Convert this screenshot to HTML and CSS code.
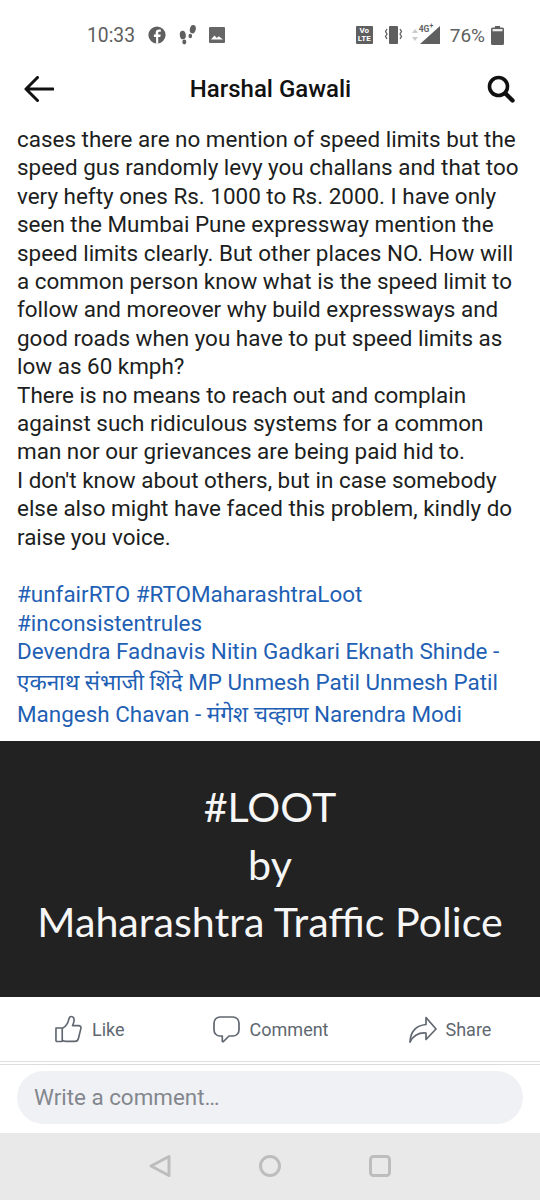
FILE: index.html
```html
<!DOCTYPE html>
<html lang="en">
<head>
<meta charset="utf-8">
<title>Harshal Gawali</title>
<link rel="stylesheet" href="styles.css">
</head>
<body>
<div class="phone">
  <div class="status">
    <div class="status-left">
      <span class="time">10:33</span>
      <svg class="ic-fb" viewBox="0 0 18 18"><circle cx="9" cy="9" r="8.6" fill="#5f5f5f"/><path d="M10.2 17.5v-6.4h2.1l.4-2.5h-2.5V7c0-.8.3-1.3 1.3-1.3h1.3V3.5c-.4 0-1-.1-1.800-.1-2 0-3.300 1.200-3.300 3.300v1.900H5.900v2.500h2.200v6.400z" fill="#fff"/></svg>
      <svg class="ic-steps" viewBox="0 0 18 20"><g fill="#5f5f5f"><ellipse cx="3.800" cy="10" rx="3" ry="4.300" transform="rotate(-8 3.800 10)"/><ellipse cx="5.300" cy="17" rx="2" ry="2.400"/><ellipse cx="13.800" cy="4.200" rx="2.900" ry="4.200" transform="rotate(14 13.800 4.200)"/><ellipse cx="11.300" cy="11" rx="1.800" ry="2.200"/></g></svg>
      <svg class="ic-img" viewBox="0 0 16 16"><rect width="16" height="16" rx="1" fill="#666"/><path d="M2 12.500l3.500-4 2.300 2.500 2-1.800 4.200 3.300z" fill="#fff"/></svg>
    </div>
    <div class="status-right">
      <span class="volte"><span>Vo</span><span>LTE</span></span>
      <svg class="ic-vib" viewBox="0 0 19 18"><rect x="5" y="0" width="9" height="18" rx="1" fill="#5f5f5f"/><path d="M3 3 1.500 5.500 3 8 1.500 10.500 3 13M16 3l1.500 2.500L16 8l1.500 2.500L16 13" fill="none" stroke="#5f5f5f" stroke-width="1.300"/></svg>
      <svg class="ic-updown" viewBox="0 0 6 12"><path d="M3 0 6 4H0zM3 12 0 8h6z" fill="#ccc"/></svg>
      <span class="signal">
        <svg class="ic-signal" viewBox="0 0 20 18"><path d="M20 0V18H0z" fill="#5f5f5f"/></svg>
        <span class="net">4G<sup>+</sup></span>
      </span>
      <span class="pct">76%</span>
      <svg class="ic-batt" viewBox="0 0 13 19"><path d="M4 0h5v1.500h2.500A1.500 1.500 0 0 1 13 3v14.500a1.500 1.500 0 0 1-1.500 1.500h-10A1.500 1.500 0 0 1 0 17.500V3a1.500 1.500 0 0 1 1.500-1.500H4z" fill="#5f5f5f"/><rect x="1.500" y="3" width="10" height="2.300" fill="#e8e8e8"/></svg>
    </div>
  </div>

  <header class="topbar">
    <svg class="ic-back" viewBox="0 0 30 26"><path d="M29 13H2M13.500 1.500 2 13l11.500 11.500" fill="none" stroke="#111" stroke-width="3" stroke-linecap="round" stroke-linejoin="round"/></svg>
    <h1 class="title">Harshal Gawali</h1>
    <svg class="ic-search" viewBox="0 0 28 28"><circle cx="11.500" cy="11.500" r="9" fill="none" stroke="#111" stroke-width="3.600"/><path d="M18.500 18.500 25.500 25.500" stroke="#111" stroke-width="4.400" stroke-linecap="round"/></svg>
  </header>

  <main class="post">
    <p class="body-text">cases there are no mention of speed limits but the<br>speed gus randomly levy you challans and that too<br>very hefty ones Rs. 1000 to Rs. 2000. I have only<br>seen the Mumbai Pune expressway mention the<br>speed limits clearly. But other places NO. How will<br>a common person know what is the speed limit to<br>follow and moreover why build expressways and<br>good roads when you have to put speed limits as<br>low as 60 kmph?<br>There is no means to reach out and complain<br>against such ridiculous systems for a common<br>man nor our grievances are being paid hid to.<br>I don't know about others, but in case somebody<br>else also might have faced this problem, kindly do<br>raise you voice.</p>
    <div class="links">
      <div class="link-line">#unfairRTO #RTOMaharashtraLoot</div>
      <div class="link-line">#inconsistentrules</div>
      <div class="link-line">Devendra Fadnavis Nitin Gadkari Eknath Shinde -</div>
      <div class="link-line tall">एकनाथ संभाजी शिंदे MP Unmesh Patil Unmesh Patil</div>
      <div class="link-line tall">Mangesh Chavan - मंगेश चव्हाण Narendra Modi</div>
    </div>
  </main>

  <section class="banner">
    <div class="banner-line">#LOOT</div>
    <div class="banner-line">by</div>
    <div class="banner-line">Maharashtra Traffic Police</div>
  </section>

  <div class="actions">
    <div class="action">
      <svg class="ic-like" viewBox="0 0 28 28"><path d="M1 13h6.500v14H2a1 1 0 0 1-1-1zM7.500 13.500c3.500-2 6-5.500 6.800-9.500.300-1.800 1.200-3 2.700-3 2 0 3 2 2.700 4.500-.200 1.800-.8 3.500-1.500 5h6.300c1.800 0 2.800 1.300 2.300 3.100l-2.500 10.200c-.500 2-1.800 3-3.700 3H11c-1.500 0-2.500-.4-3.500-1.300" fill="none" stroke="#606770" stroke-width="1.700" stroke-linejoin="round"/></svg>
      <span>Like</span>
    </div>
    <div class="action action-comment">
      <svg class="ic-comment" viewBox="0 0 27 27"><path d="M7 1h13a6 6 0 0 1 6 6v7a6 6 0 0 1-6 6h-4l-5.500 5.500c-.6.500-1.200.2-1.200-.5v-5H7a6 6 0 0 1-6-6V7a6 6 0 0 1 6-6z" fill="none" stroke="#606770" stroke-width="1.700" stroke-linejoin="round"/></svg>
      <span>Comment</span>
    </div>
    <div class="action action-share">
      <svg class="ic-share" viewBox="0 0 28 27"><path d="M17 1.500 27 13 17 23.500V17C10 16.500 4.500 19 1 26c.5-10 6-16.500 16-17.500z" fill="none" stroke="#606770" stroke-width="1.700" stroke-linejoin="round"/></svg>
      <span>Share</span>
    </div>
  </div>

  <div class="composer">
    <div class="comment-box">Write a comment…</div>
  </div>

  <nav class="navbar">
    <svg class="ic-nav" viewBox="0 0 22 24"><path d="M20 2.500v19L2 12z" fill="none" stroke="#bdbdbd" stroke-width="3" stroke-linejoin="round"/></svg>
    <svg class="ic-nav" viewBox="0 0 24 24"><circle cx="12" cy="12" r="9.500" fill="none" stroke="#bdbdbd" stroke-width="3"/></svg>
    <svg class="ic-nav" viewBox="0 0 24 24"><rect x="2.500" y="2.500" width="19" height="19" rx="3" fill="none" stroke="#bdbdbd" stroke-width="3"/></svg>
  </nav>
</div>
</body>
</html>
```
FILE: styles.css
```css
* { box-sizing: border-box; }
html, body { margin: 0; padding: 0; }
body { background: #fff; font-family: Roboto, "Noto Sans", "Liberation Sans", sans-serif; }
.phone { width: 540px; height: 1200px; overflow: hidden; display: flex; flex-direction: column; }

.status { height: 62px; padding: 8px 36px 0 87px; display: flex; align-items: center; justify-content: space-between; color: #5f5f5f; }
.status-left, .status-right { display: flex; align-items: center; }
.time { font-size: 19.300px; margin-right: 13px; }
.ic-fb { width: 18px; height: 18px; margin-right: 13px; }
.ic-steps { width: 18px; height: 20px; margin-right: 12px; }
.ic-img { width: 16px; height: 16px; }
.volte { width: 17px; height: 18px; background: #5f5f5f; color: #fff; font-size: 8px; font-weight: 700; line-height: 8px; display: flex; flex-direction: column; align-items: center; justify-content: center; border-radius: 1px; margin-right: 11px; }
.ic-vib { width: 19px; height: 18px; margin-right: 9px; }
.ic-updown { width: 6px; height: 12px; margin-right: 2px; }
.signal { position: relative; width: 20px; height: 18px; margin-right: 10px; }
.ic-signal { width: 20px; height: 18px; display: block; }
.net { position: absolute; left: -1px; top: -1px; font-size: 8.500px; font-weight: 700; line-height: 9px; color: #5f5f5f; }
.net sup { font-size: 7px; line-height: 0; }
.pct { font-size: 19px; margin-right: 6px; }
.ic-batt { width: 13px; height: 19px; }

.topbar { height: 54px; padding: 0 25px 0 24px; display: flex; align-items: center; justify-content: space-between; }
.ic-back { width: 30px; height: 26px; }
.ic-search { width: 28px; height: 28px; }
.title { margin: 0; font-size: 24px; font-weight: 500; color: #111; }

.post { height: 625px; padding: 9px 17px 0; overflow: hidden; color: #1c1e21; font-size: 22.450px; }
.body-text { margin: 0 0 29px; line-height: 28.400px; }
.links { color: #1f5fb4; }
.link-line { line-height: 28.500px; white-space: nowrap; }
.link-line.tall { line-height: 32px; }

.banner { height: 256px; background: #222; color: #f6f6f6; font-family: Lato, "Open Sans", sans-serif; font-size: 41.200px; text-align: center; padding-top: 37px; }
.banner-line { line-height: 57.500px; }

.actions { height: 65px; display: flex; align-items: center; padding: 0 0 0 55px; color: #606770; font-size: 18px; border-bottom: 1px solid #ddd; }
.action { display: flex; align-items: center; gap: 10px; }
.action-comment { margin-left: 88px; }
.action-share { margin-left: 80px; gap: 9px; }
.ic-like { width: 27px; height: 28px; }
.ic-comment { width: 27px; height: 27px; }
.ic-share { width: 28px; height: 27px; }

.composer { height: 69px; margin-top: 2px; border-top: 1px solid #ddd; padding: 6px 17px 0; }
.comment-box { height: 53px; border-radius: 27px; background: #f0f1f5; color: #83878d; font-size: 22.400px; line-height: 53px; padding-left: 17px; }

.navbar { flex: 1; background: #e9e9e9; display: flex; justify-content: center; align-items: center; gap: 86px; padding-bottom: 2px; }
.ic-nav { width: 24px; height: 24px; }
```
